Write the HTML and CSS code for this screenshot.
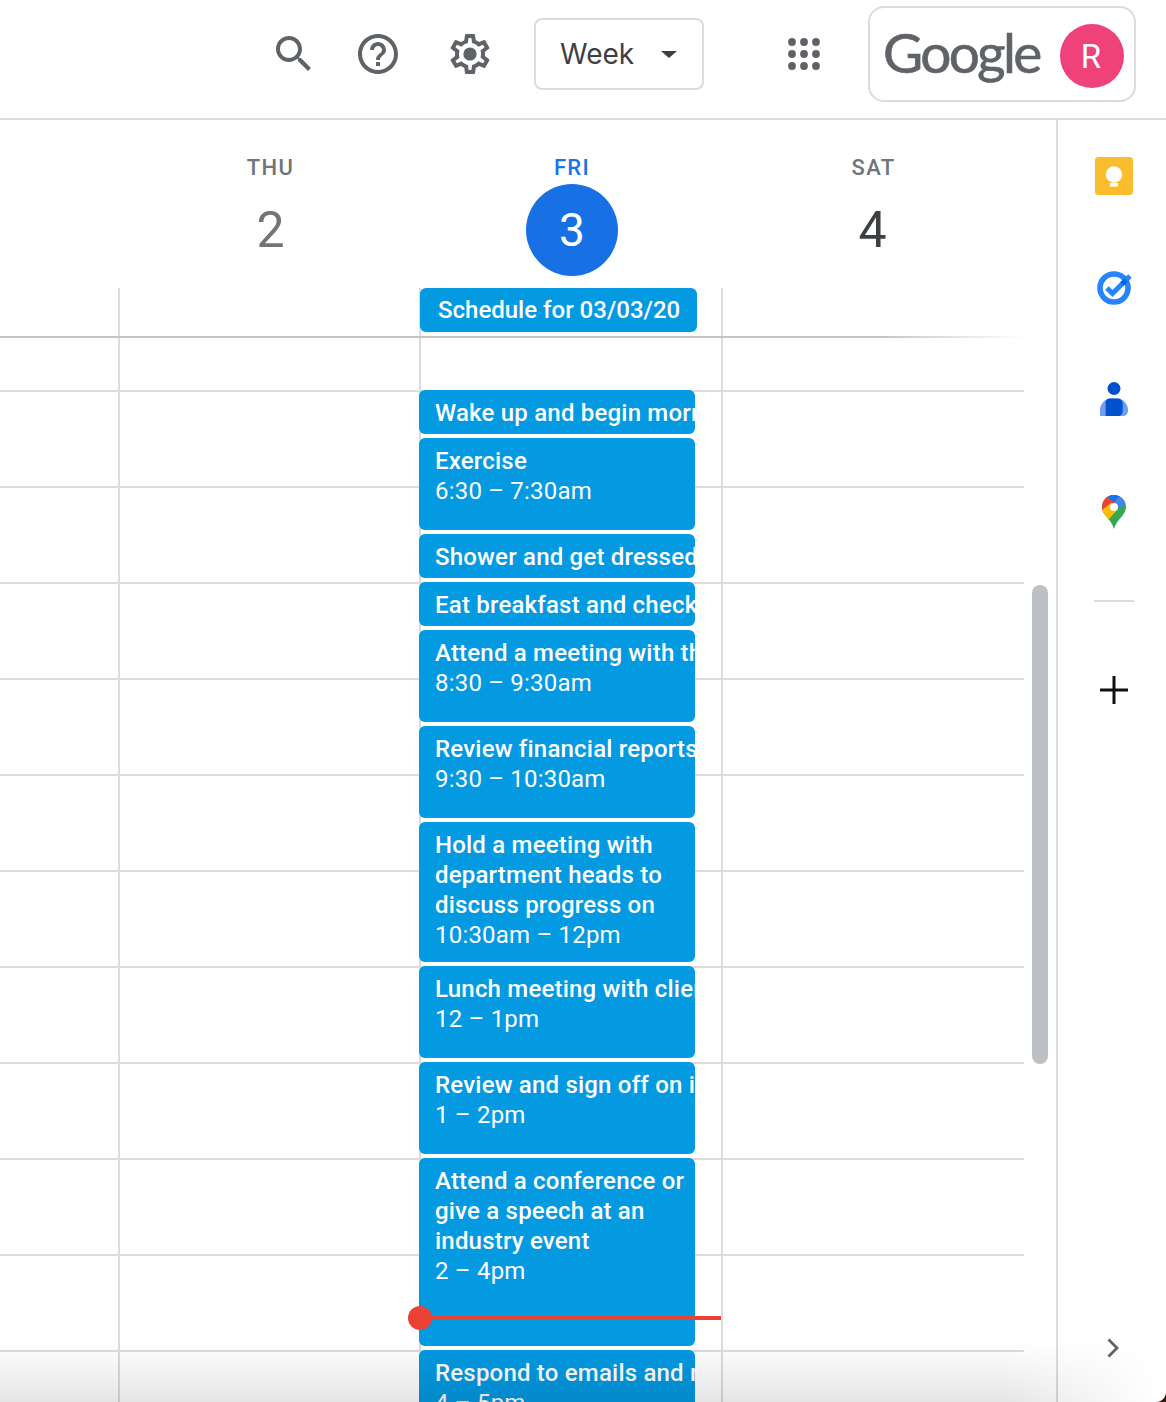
FILE: index.html
```html
<!DOCTYPE html>
<html lang="en">
<head>
<meta charset="utf-8">
<title>Calendar</title>
<link rel="stylesheet" href="styles.css">
</head>
<body>
<div class="page">
  <header class="topbar">
    <svg class="icon icon-search" viewBox="0 0 24 24"><path d="M15.5 14h-.79l-.28-.27C15.41 12.59 16 11.11 16 9.5 16 5.91 13.09 3 9.5 3S3 5.91 3 9.5 5.91 16 9.5 16c1.61 0 3.09-.59 4.23-1.57l.27.28v.79l5 4.99L20.49 19l-4.99-5zm-6 0C7.01 14 5 11.99 5 9.5S7.01 5 9.5 5 14 7.01 14 9.5 11.99 14 9.5 14z"/></svg>
    <svg class="icon icon-help" viewBox="0 0 24 24"><path d="M11 18h2v-2h-2v2zm1-16C6.48 2 2 6.48 2 12s4.48 10 10 10 10-4.48 10-10S17.52 2 12 2zm0 18c-4.41 0-8-3.59-8-8s3.59-8 8-8 8 3.59 8 8-3.59 8-8 8zm0-14c-2.21 0-4 1.79-4 4h2c0-1.1.9-2 2-2s2 .9 2 2c0 2-3 1.75-3 5h2c0-2.25 3-2.5 3-5 0-2.21-1.79-4-4-4z"/></svg>
    <svg class="icon icon-gear" viewBox="0 0 24 24"><path d="M19.43 12.98c.04-.32.07-.64.07-.98 0-.34-.03-.66-.07-.98l2.11-1.65c.19-.15.24-.42.12-.64l-2-3.46c-.09-.16-.26-.25-.44-.25-.06 0-.12.01-.17.03l-2.49 1c-.52-.4-1.08-.73-1.69-.98l-.38-2.65C14.46 2.18 14.25 2 14 2h-4c-.25 0-.46.18-.49.42l-.38 2.65c-.61.25-1.17.59-1.69.98l-2.49-1c-.06-.02-.12-.03-.18-.03-.17 0-.34.09-.43.25l-2 3.46c-.13.22-.07.49.12.64l2.11 1.65c-.04.32-.07.65-.07.98 0 .33.03.66.07.98l-2.11 1.65c-.19.15-.24.42-.12.64l2 3.46c.09.16.26.25.44.25.06 0 .12-.01.17-.03l2.49-1c.52.4 1.08.73 1.69.98l.38 2.65c.03.24.24.42.49.42h4c.25 0 .46-.18.49-.42l.38-2.65c.61-.25 1.17-.59 1.69-.98l2.49 1c.06.02.12.03.18.03.17 0 .34-.09.43-.25l2-3.46c.12-.22.07-.49-.12-.64l-2.11-1.65zm-1.98-1.71c.04.31.05.52.05.73 0 .21-.02.43-.05.73l-.14 1.13.89.7 1.08.84-.7 1.21-1.27-.51-1.04-.42-.9.68c-.43.32-.84.56-1.25.73l-1.06.43-.16 1.13-.2 1.35h-1.4l-.19-1.35-.16-1.13-1.06-.43c-.43-.18-.83-.41-1.23-.71l-.91-.7-1.06.43-1.27.51-.7-1.21 1.08-.84.89-.7-.14-1.13c-.03-.31-.05-.54-.05-.74s.02-.43.05-.73l.14-1.13-.89-.7-1.08-.84.7-1.21 1.27.51 1.04.42.9-.68c.43-.32.84-.56 1.25-.73l1.06-.43.16-1.13.2-1.35h1.39l.19 1.35.16 1.13 1.06.43c.43.18.83.41 1.23.71l.91.7 1.06-.43 1.27-.51.7 1.21-1.07.85-.89.7.14 1.13z"/><circle cx="12" cy="12" r="3.3"/></svg>
    <div class="week-btn"><span>Week</span><i class="caret"></i></div>
    <svg class="icon icon-apps" viewBox="0 0 48 48"><circle cx="12" cy="12" r="3.9"/><circle cx="24" cy="12" r="3.9"/><circle cx="36" cy="12" r="3.9"/><circle cx="12" cy="24" r="3.9"/><circle cx="24" cy="24" r="3.9"/><circle cx="36" cy="24" r="3.9"/><circle cx="12" cy="36" r="3.9"/><circle cx="24" cy="36" r="3.9"/><circle cx="36" cy="36" r="3.9"/></svg>
    <div class="account">
      <span class="wordmark">Google</span>
      <span class="avatar">R</span>
    </div>
  </header>

  <main class="main">
    <section class="calendar">
      <div class="day-heads">
        <div class="day-head"><div class="dow">THU</div><div class="num">2</div></div>
        <div class="day-head today"><div class="dow">FRI</div><div class="num">3</div></div>
        <div class="day-head"><div class="dow">SAT</div><div class="num dark">4</div></div>
      </div>
      <div class="allday">
        <div class="col"></div>
        <div class="col"><div class="event allday-event">Schedule for 03/03/20</div></div>
        <div class="col"></div>
      </div>
      <div class="grid">
        <div class="col"></div>
        <div class="col col-today">
          <div class="events">
            <div class="event h44"><div class="title">Wake up and begin morning routine</div></div>
            <div class="event h92"><div class="title">Exercise</div><div class="time">6:30 – 7:30am</div></div>
            <div class="event h44"><div class="title">Shower and get dressed for work</div></div>
            <div class="event h44"><div class="title">Eat breakfast and check emails</div></div>
            <div class="event h92"><div class="title">Attend a meeting with the team</div><div class="time">8:30 – 9:30am</div></div>
            <div class="event h92"><div class="title">Review financial reports for the week</div><div class="time">9:30 – 10:30am</div></div>
            <div class="event h140"><div class="title">Hold a meeting with<br>department heads to<br>discuss progress on</div><div class="time">10:30am – 12pm</div></div>
            <div class="event h92"><div class="title">Lunch meeting with clients</div><div class="time">12 – 1pm</div></div>
            <div class="event h92"><div class="title">Review and sign off on invoices</div><div class="time">1 – 2pm</div></div>
            <div class="event h188"><div class="title">Attend a conference or<br>give a speech at an<br>industry event</div><div class="time">2 – 4pm</div></div>
            <div class="event h92"><div class="title">Respond to emails and return calls</div><div class="time">4 – 5pm</div></div>
          </div>
          <div class="now-line"><i class="now-dot"></i></div>
        </div>
        <div class="col"></div>
      </div>
      <div class="scrollbar"></div>
    </section>

    <aside class="side">
      <div class="side-slot">
        <svg class="app-icon" width="38" height="38" viewBox="0 0 38 38"><rect width="38" height="38" rx="3.5" fill="#fbbc2e"/><circle cx="19" cy="17.5" r="8.2" fill="#fff"/><rect x="15" y="26" width="8" height="3.6" fill="#fff"/></svg>
      </div>
      <div class="side-slot">
        <svg class="app-icon tasks" width="40" height="40" viewBox="0 0 40 40"><circle cx="20" cy="21" r="14" fill="none" stroke="#2684fc" stroke-width="5.6"/><path d="M13 21l5.500 5.500L36 9" fill="none" stroke="#2684fc" stroke-width="5"/><path d="M28 17l4-4" fill="none" stroke="#0066da" stroke-width="5"/></svg>
      </div>
      <div class="side-slot">
        <svg class="app-icon" width="40" height="40" viewBox="0 0 40 40"><circle cx="20" cy="8.500" r="6.500" fill="#0052cc"/><path d="M6 36v-6c0-6 5-11.500 11-11.500h6c6 0 11 5.500 11 11.500 0 4-2 6-6 6z" fill="#6f9df1"/><path d="M11.700 36V22.500c0-2.500 1.500-4 4-4h8c3.500 0 5 2.500 5 5.500V31c0 3-2 5-5 5z" fill="#0052cc"/></svg>
      </div>
      <div class="side-slot">
        <svg class="app-icon" width="24" height="34" viewBox="0 0 24 34">
          <defs><clipPath id="pin"><path d="M12 0C5.400 0 0 5.300 0 11.800c0 3.500 1.400 6 3.600 9C7 25 10.500 28.500 12 34c1.500-5.500 5-9 8.400-13.200 2.200-3 3.600-5.500 3.600-9C24 5.300 18.600 0 12 0z"/></clipPath></defs>
          <g clip-path="url(#pin)">
            <rect width="24" height="34" fill="#34a853"/>
            <path d="M0 0h24v9L16 13 8 5z" fill="#4285f4"/>
            <path d="M0 0h11l-1 2 4 7-12 9-2-2z" fill="#ea4335"/>
            <path d="M4 0h15L12 7 7 4z" fill="#1a73e8"/>
            <path d="M0 15l9-7 7 6L6 25z" fill="#fbbc04"/>
          </g>
          <circle cx="12" cy="12" r="4" fill="#fff"/>
        </svg>
      </div>
      <div class="side-rule"></div>
      <svg class="side-plus" width="28" height="28" viewBox="0 0 28 28"><path d="M14 0v28M0 14h28" stroke="#111" stroke-width="3" fill="none"/></svg>
      <svg class="side-chevron" width="12" height="20" viewBox="0 0 12 20"><path d="M1.500 1.500L10 10l-8.500 8.500" stroke="#5f6368" stroke-width="2.800" fill="none"/></svg>
    </aside>
  </main>
  <div class="fade"></div>
  <div class="corner"></div>
</div>
</body>
</html>
```

FILE: styles.css
```css
* { box-sizing: border-box; }
html, body { margin: 0; padding: 0; background: #fff; }
body { font-family: Roboto, "Liberation Sans", sans-serif; color: #3c4043; overflow: hidden; }
.page { position: relative; width: 1166px; height: 1402px; overflow: hidden; display: flex; flex-direction: column; }

/* top bar */
.topbar { flex: none; height: 120px; border-bottom: 2px solid #dadce0; display: flex; align-items: center; justify-content: flex-end; padding: 0 30px 10px 0; }
.icon { width: 48px; height: 48px; fill: #5f6368; flex: none; }
.icon-help { margin-left: 36px; }
.icon-gear { margin-left: 44px; }
.icon-apps { margin-left: 76px; }
.week-btn { width: 170px; height: 72px; margin-left: 40px; border: 2px solid #dadce0; border-radius: 8px; display: flex; align-items: center; padding-left: 24px; font-family: Inter, Roboto, sans-serif; font-size: 28px; color: #3c4043; }
.caret { width: 0; height: 0; margin-left: 27px; border-left: 8px solid transparent; border-right: 8px solid transparent; border-top: 7px solid #3c4043; }
.account { width: 268px; height: 96px; margin-left: 40px; border: 2px solid #dadce0; border-radius: 16px; display: flex; align-items: center; padding-left: 13px; }
.wordmark { width: 177px; margin-top: -4px; font-family: Lato, Roboto, sans-serif; font-size: 55px; letter-spacing: -2.700px; -webkit-text-stroke: .6px #5f6368; color: #5f6368; line-height: 1; }
.avatar { width: 64px; height: 64px; margin-top: 4px; padding-right: 2px; border-radius: 50%; background: #ef427a; color: #fff; font-size: 33px; font-weight: 400; display: flex; align-items: center; justify-content: center; }

/* main */
.main { flex: 1; display: flex; min-height: 0; }
.calendar { position: relative; flex: none; width: 1058px; border-right: 2px solid #dadce0; overflow: hidden; }
.day-heads { height: 168px; width: 1026px; display: grid; grid-template-columns: 301px 302px 301px; padding-left: 120px; }
.day-head { display: flex; flex-direction: column; align-items: center; padding-top: 33px; }
.dow { font-size: 22px; line-height: 30px; letter-spacing: 1.300px; color: #70757a; font-weight: 500; }
.num { width: 92px; height: 92px; margin-top: 1px; border-radius: 50%; display: flex; align-items: center; justify-content: center; font-size: 50px; color: #70757a; }
.num.dark { color: #3c4043; padding-right: 2px; }
.today .dow { color: #1a73e8; }
.today .num { background: #1871e4; color: #fff; font-size: 46px; }

.allday, .grid { width: 1024px; display: grid; grid-template-columns: 301px 302px 303px; padding-left: 118px; }
.allday { height: 50px; position: relative; border-bottom: 2px solid; border-image: linear-gradient(to right, #c4c5c8 0, #c4c5c8 880px, rgba(196,197,200,0) 1024px) 1; }
.grid { height: 1064px; background-image: linear-gradient(#dadce0 2px, transparent 2px); background-size: 100% 96px; background-position: 0 52px; }
.col { border-left: 2px solid #dadce0; position: relative; }

.event { background: #039ae2; color: #fff; border-radius: 6px; font-size: 24px; line-height: 30px; overflow: hidden; font-weight: 500; }
.allday-event { width: 277px; height: 44px; margin-left: -1px; padding: 7px 0 0 18px; white-space: nowrap; }
.events { display: flex; flex-direction: column; gap: 4px; width: 276px; margin: 52px 0 0 -2px; }
.events .event { padding: 8px 0 0 16px; white-space: nowrap; letter-spacing: .2px; }
.time { font-weight: 400; }
.h44 { height: 44px; flex: none; }
.h92 { height: 92px; flex: none; }
.h140 { height: 140px; flex: none; }
.h188 { height: 188px; flex: none; }

.now-line { position: absolute; left: 0; top: 978px; width: 300px; height: 4px; background: #ea4335; }
.now-dot { position: absolute; left: -13px; top: -10px; width: 24px; height: 24px; border-radius: 50%; background: #ea4335; }

.scrollbar { position: absolute; left: 1032px; top: 465px; width: 16px; height: 479px; border-radius: 8px; background: #bdc1c6; }

/* side panel */
.side { flex: 1; display: flex; flex-direction: column; align-items: center; padding-left: 4px; }
.side-slot { flex: none; height: 112px; width: 100%; display: flex; align-items: center; justify-content: center; }
.tasks { margin-top: -3px; }
.side-rule { flex: none; width: 40px; height: 2px; background: #dadce0; margin-top: 32px; }
.side-plus { flex: none; margin-top: 74px; }
.side-chevron { flex: none; margin-top: auto; margin-bottom: 44px; margin-right: 2px; }

/* window edge fade */
.fade { position: absolute; left: 0; right: 0; bottom: 0; height: 62px; background: linear-gradient(to bottom, rgba(0,0,0,0), rgba(0,0,0,.1)); -webkit-mask-image: linear-gradient(to right, #000 1000px, transparent 1160px); mask-image: linear-gradient(to right, #000 1000px, transparent 1160px); pointer-events: none; }
.corner { position: absolute; right: 0; bottom: 0; width: 10px; height: 10px; background: radial-gradient(circle at 0 0, transparent 9.5px, #3a1408 10.500px); }
```
